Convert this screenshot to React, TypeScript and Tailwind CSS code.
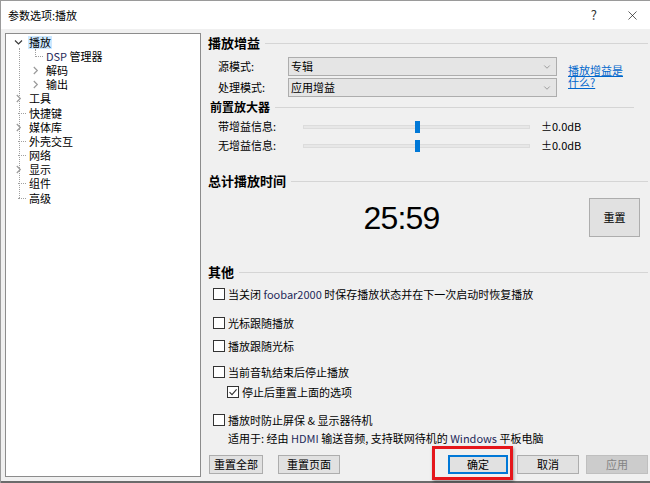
import React from "react";
import { X, ChevronDown } from "lucide-react";

const FONT = { fontFamily: '"Noto Sans CJK SC", "Noto Sans", sans-serif' };

interface TreeItem {
  label: React.ReactNode;
  level: number;
  expand?: "open" | "closed";
  selected?: boolean;
}

const treeItems: TreeItem[] = [
  { label: "播放", level: 0, expand: "open", selected: true },
  { label: <><span className="text-[#1f2a5a]">DSP</span> 管理器</>, level: 1 },
  { label: "解码", level: 1, expand: "closed" },
  { label: "输出", level: 1, expand: "closed" },
  { label: "工具", level: 0, expand: "closed" },
  { label: "快捷键", level: 0 },
  { label: "媒体库", level: 0, expand: "closed" },
  { label: "外壳交互", level: 0 },
  { label: "网络", level: 0 },
  { label: "显示", level: 0, expand: "closed" },
  { label: "组件", level: 0 },
  { label: "高级", level: 0 },
];

// Windows-style tree expanders
const OpenArrow = () => (
  <svg width="9" height="9" viewBox="0 0 9 9" className="bg-white">
    <path d="M1 2.5 L4.5 6 L8 2.5" fill="none" stroke="#3a3a3a" strokeWidth="1.2" />
  </svg>
);

const ClosedArrow = () => (
  <svg width="9" height="9" viewBox="0 0 9 9" className="bg-white">
    <path d="M2.8 1 L6.3 4.5 L2.8 8" fill="none" stroke="#9a9a9a" strokeWidth="1.2" />
  </svg>
);

const TreeRow = ({ item }: { item: TreeItem }) => (
  <div className={`flex items-center h-[14.2px] ${item.level === 1 ? "pl-[21px]" : "pl-[4px]"}`}>
    <div className={`w-[16px] mr-[2px] h-full flex items-center ${item.expand ? "justify-center" : "justify-start"}`}>
      {item.expand === "open" && <OpenArrow />}
      {item.expand === "closed" && <ClosedArrow />}
      {!item.expand && <div className="ml-[8px] w-[10px] border-t border-dotted border-[#a0a0a0]" />}
    </div>
    <span className={`px-[1px] leading-[13px] ${item.selected ? "bg-[#cce8ff]" : ""}`}>{item.label}</span>
  </div>
);

const Header = ({ title, size = "text-[13px]", className = "" }: { title: string; size?: string; className?: string }) => (
  <div className={`flex items-center h-4 ${className}`}>
    <span className={`font-bold ${size} leading-4`}>{title}</span>
    <div className="flex-1 h-px bg-[#d5d5d5] ml-[5px]" />
  </div>
);

const Select = ({ value }: { value: string }) => (
  <div className="w-[269px] h-[19px] bg-[#e5e5e5] border border-[#adadad] flex items-center pl-[2px] pr-[4px]">
    <span className="flex-1">{value}</span>
    <ChevronDown size={10} strokeWidth={1.2} className="text-[#555]" />
  </div>
);

const Slider = ({ label }: { label: string }) => (
  <div className="flex items-center h-[19px] pl-[10px]">
    <span className="w-[85px]">{label}</span>
    <div className="relative w-[227px] h-[4px] bg-[#e7e7e7] border border-[#dcdcdc]">
      <div className="absolute left-[111px] top-[-5px] w-[5px] h-[12px] bg-[#0078d7]" />
    </div>
    <span className="ml-[11px]">±0.0dB</span>
  </div>
);

const Check = ({ checked = false, children, className = "" }: { checked?: boolean; children: React.ReactNode; className?: string }) => (
  <div className={`flex items-center h-4 ${className}`}>
    <div className="w-[12px] h-[12px] border border-[#333] bg-white flex items-center justify-center mr-[3px]">
      {checked && (
        <svg width="10" height="10" viewBox="0 0 10 10">
          <path d="M1.5 5.2 L4 7.6 L8.6 2.4" fill="none" stroke="#333" strokeWidth="1.1" />
        </svg>
      )}
    </div>
    <span>{children}</span>
  </div>
);

const Btn = ({ children, className = "", disabled = false }: { children: React.ReactNode; className?: string; disabled?: boolean }) => (
  <div
    className={`h-[19px] flex items-center justify-center border ${
      disabled ? "bg-[#cccccc] border-[#bfbfbf] text-[#838383]" : "bg-[#e1e1e1] border-[#adadad]"
    } ${className}`}
  >
    {children}
  </div>
);

export default function App() {
  return (
    <div className="w-[650px] h-[483px] flex flex-col bg-[#f0f0f0] text-[11px] text-black overflow-hidden border-l border-t border-[#9a9a9a]" style={FONT}>
      {/* Title bar */}
      <div className="h-[28px] bg-white flex items-center pl-[7px] pr-[10px] shrink-0">
        <span className="flex-1 text-[11px]">参数选项:播放</span>
        <span className="text-[13px] mr-[28px] text-[#333]">?</span>
        <X size={15} strokeWidth={1} />
      </div>

      <div className="flex flex-1 pl-[4px] pt-[4px]">
        {/* Tree */}
        <div className="relative w-[196px] h-[444px] bg-white border border-[#8c8c8c] pt-[1px]">
          <div className="absolute left-[13px] top-[14px] h-[150px] border-l border-dotted border-[#a0a0a0]" />
          <div className="absolute left-[29px] top-[15px] h-[8px] border-l border-dotted border-[#a0a0a0]" />
          {treeItems.map((item, i) => (
            <TreeRow key={i} item={item} />
          ))}
        </div>

        {/* Right page */}
        <div className="flex-1 flex flex-col pl-[7px] pr-[2px]">
          <Header title="播放增益" className="mt-[2px]" />

          <div className="flex mt-[6px]">
            <div className="flex flex-col gap-[2px]">
              <div className="flex items-center pl-[10px]">
                <span className="w-[70px]">源模式:</span>
                <Select value="专辑" />
              </div>
              <div className="flex items-center pl-[10px]">
                <span className="w-[70px]">处理模式:</span>
                <Select value="应用增益" />
              </div>
            </div>
            <div className="ml-[11px] mt-[7px] text-[#0066cc] underline leading-[12px] flex flex-col">
              <span>播放增益是</span>
              <span>什么?</span>
            </div>
          </div>

          <Header title="前置放大器" size="text-[12px]" className="mt-[2px] ml-[2px] mr-[14px]" />
          <div className="mt-[2px]">
            <Slider label="带增益信息:" />
            <Slider label="无增益信息:" />
          </div>

          <Header title="总计播放时间" className="mt-[18px]" />
          <div className="flex items-center h-[39px] mt-[9px]">
            <div className="flex-1 flex justify-center pl-[6px]">
              <span className="text-[32px] tracking-[-0.8px] leading-none" style={{ fontFamily: '"Liberation Sans", sans-serif' }}>
                25:59
              </span>
            </div>
            <Btn className="w-[51px] h-[39px] mr-[8px]">重置</Btn>
          </div>

          <Header title="其他" className="mt-[27px]" />
          <div className="flex flex-col pl-[5px]">
            <Check className="mt-[6px]">
              当关闭 <span className="text-[#1f2a5a]">foobar2000</span> 时保存播放状态并在下一次启动时恢复播放
            </Check>
            <Check className="mt-[13px]">光标跟随播放</Check>
            <Check className="mt-[7px]">播放跟随光标</Check>
            <Check className="mt-[10px]">当前音轨结束后停止播放</Check>
            <Check checked className="mt-[4px] ml-[14px]">停止后重置上面的选项</Check>
            <Check className="mt-[12px]">播放时防止屏保 &amp; 显示器待机</Check>
            <div className="h-4 mt-[2px] pl-[15px] leading-4">
              适用于: 经由 <span className="text-[#1f2a5a]">HDMI</span> 输送音频, 支持联网待机的{" "}
              <span className="text-[#1f2a5a]">Windows</span> 平板电脑
            </div>
          </div>

          <div className="flex items-center mt-[9px] pl-[1px]">
            <Btn className="w-[54px]">重置全部</Btn>
            <Btn className="w-[62px] ml-[15px]">重置页面</Btn>
            <div className="relative ml-[108px]">
              <div className="absolute left-[-16px] top-[-9px] w-[81px] h-[34px] border-[3px] border-[#e5161b] shadow-[1px_2px_3px_rgba(0,0,0,0.35)]" />
              <Btn className="w-[60px] !border-[#0078d7] outline outline-1 outline-[#0078d7] -outline-offset-2">确定</Btn>
            </div>
            <Btn className="w-[62px] ml-[9px]">取消</Btn>
            <Btn disabled className="w-[62px] ml-[7px]">应用</Btn>
          </div>
        </div>
      </div>
      <div className="h-[2px] bg-[#6b6b6b] shrink-0" />
    </div>
  );
}
